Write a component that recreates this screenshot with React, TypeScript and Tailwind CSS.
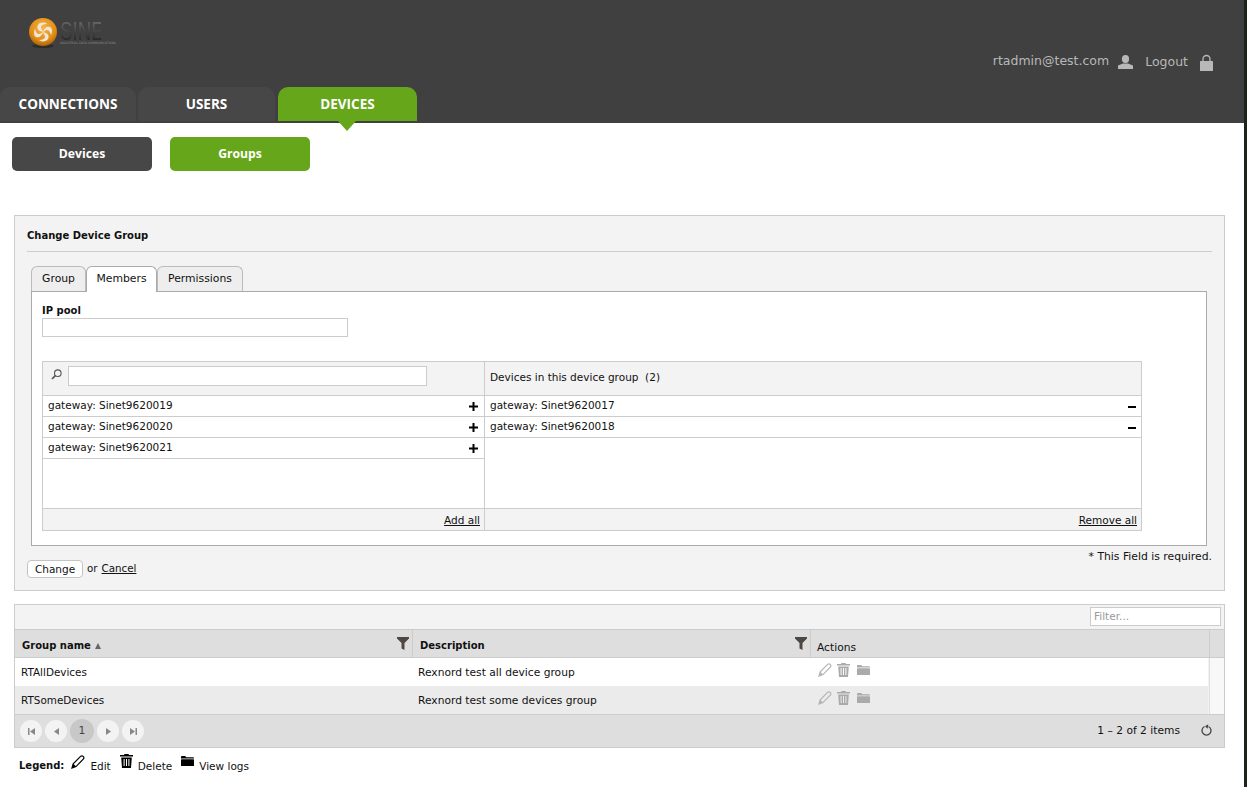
import type { ReactNode } from 'react'

const font = { fontFamily: '"DejaVu Sans", sans-serif' }

function Logo() {
  return (
    <div className="flex items-start gap-[2px]">
      <svg width="30" height="32" viewBox="0 0 30 32" className="mt-[1px]">
        <defs>
          <radialGradient id="orb" cx="50%" cy="35%" r="65%">
            <stop offset="0%" stopColor="#f5b64a" />
            <stop offset="70%" stopColor="#e28d14" />
            <stop offset="100%" stopColor="#a96208" />
          </radialGradient>
        </defs>
        <ellipse cx="15" cy="29" rx="11" ry="2" fill="#2c2c2c" />
        <circle cx="15" cy="15" r="14" fill="url(#orb)" />
        <path d="M15 15c-4-1-7-3-5-7 2-3 7-3 9-1-3 0-6 1-6 3 0 2 2 4 2 5z" fill="#f0e6d8" />
        <path d="M15 15c4 1 7 3 5 7-2 3-7 3-9 1 3 0 6-1 6-3 0-2-2-4-2-5z" fill="#f0e6d8" />
        <path d="M15 15c1-4 4-6 7-5 3 2 2 6 1 8-1-3-2-5-4-5-2 0-3 2-4 2z" fill="#f0e6d8" />
        <path d="M15 15c-1 4-4 6-7 5-3-2-2-6-1-8 1 3 2 5 4 5 2 0 3-2 4-2z" fill="#f0e6d8" />
      </svg>
      <div className="mt-[3px] flex w-[55px] flex-col">
        <span
          className="block h-[22px] origin-left scale-x-[0.75] bg-gradient-to-b from-[#707070] to-[#262626] bg-clip-text text-[25px] leading-[25px] text-transparent"
          style={{ fontFamily: '"Liberation Sans", sans-serif' }}
        >
          SINET
        </span>
        <span className="whitespace-nowrap text-[3px] leading-[5px] text-[#8a8a8a]">
          INDUSTRIAL DATA COMMUNICATIONS
        </span>
      </div>
    </div>
  )
}

function UserIcon() {
  return (
    <svg width="15" height="14" viewBox="0 0 15 14" fill="#b8b8b8">
      <ellipse cx="7.5" cy="4" rx="3.6" ry="4" />
      <path d="M0 10.5 5 8.5h5l5 2V14H0z" />
    </svg>
  )
}

function LockIcon() {
  return (
    <svg width="13" height="17" viewBox="0 0 13 17" fill="none">
      <path d="M3 8V5a3.5 3.5 0 0 1 7 0v3" stroke="#b8b8b8" strokeWidth="1.3" />
      <rect y="7" width="13" height="10" rx="0.5" fill="#b8b8b8" />
    </svg>
  )
}

function PencilIcon({ color, size = 14 }: { color: string; size?: number }) {
  return (
    <svg width={size} height={size} viewBox="0 0 14 14" fill="none">
      <path d="M1 13 2.2 8.8 9.8 1.2c.8-.6 1.8-.4 2.4.2.7.7.9 1.7.3 2.5L5 11.6z" stroke={color} strokeWidth="1.2" />
      <path d="M1 13l1.2-4.2 3 2.8z" fill={color} />
    </svg>
  )
}

function TrashIcon({ color }: { color: string }) {
  return (
    <svg width="13" height="14" viewBox="0 0 13 14" fill={color}>
      <path d="M4.5 0h4l.5 1h4v1.5H0V1h4z" />
      <path d="M1.2 3.5h10.6L11 14H2zM3.6 5v7h1V5zm2.4 0v7h1V5zm2.4 0v7h1V5z" fillRule="evenodd" />
    </svg>
  )
}

function FolderIcon({ color }: { color: string }) {
  return (
    <svg width="13" height="10" viewBox="0 0 13 10" fill={color}>
      <path d="M0 1.2C0 .5.4 0 1 0h3.2l1 1.2H12c.6 0 1 .4 1 1V2.600H0z" />
      <rect y="3.200" width="13" height="6.800" rx="0.6" />
    </svg>
  )
}

function FilterIcon() {
  return (
    <svg width="12" height="13" viewBox="0 0 12 13" fill="#4f4842">
      <path d="M0 0h12v1.500L7.500 6v7l-3-1.500V6L0 1.500z" />
    </svg>
  )
}

function SearchIcon() {
  return (
    <svg width="11" height="11" viewBox="0 0 11 11" fill="none" stroke="#555">
      <circle cx="6.800" cy="4.200" r="3.300" strokeWidth="1.100" />
      <path d="M4.300 6.700 1 10" strokeWidth="1.700" />
    </svg>
  )
}

function PagerButton({ children }: { children: ReactNode }) {
  return (
    <div className="flex h-[22px] w-[22px] items-center justify-center rounded-full bg-[#f3f3f3]">
      {children}
    </div>
  )
}

function ListRow({ label, sign }: { label: string; sign: '+' | '-' }) {
  return (
    <div className="flex h-[21px] items-center justify-between border-b border-[#cccccc] pl-[5px] pr-[5px] text-[10.5px]">
      <span>{label}</span>
      {sign === '+' ? (
        <svg width="9" height="9" viewBox="0 0 9 9" fill="#000" className="mt-[1px] mr-[1px]">
          <path d="M3.500 0h2v3.500H9v2H5.500V9h-2V5.500H0v-2h3.500z" />
        </svg>
      ) : (
        <span className="mt-[1px] h-[2px] w-[8px] bg-black" />
      )}
    </div>
  )
}

function ActionIcons() {
  return (
    <div className="flex items-start gap-[5px] pl-[7px] pt-[5px]">
      <PencilIcon color="#b5b5b5" />
      <TrashIcon color="#aaaaaa" />
      <div className="ml-[2px] mt-[2px]">
        <FolderIcon color="#aaaaaa" />
      </div>
    </div>
  )
}

export default function App() {
  return (
    <div className="flex h-[787px] w-[1247px] overflow-hidden bg-white text-[10.7px] text-[#111]" style={font}>
      <div className="w-[1244px]">
        <header className="h-[123px] bg-[#404040]">
          <div className="flex h-[87px] justify-between">
            <div className="pl-[28px] pt-[16px]">
              <Logo />
            </div>
            <div className="flex items-start pr-[31px] pt-[53px] text-[#b8b8b8]">
              <span className="text-[12.5px] leading-[15px]">rtadmin@test.com</span>
              <div className="ml-[9px] mt-[2px]">
                <UserIcon />
              </div>
              <span className="ml-[12px] mt-[1px] text-[12.5px] leading-[15px]">Logout</span>
              <div className="ml-[12px] mt-[1px]">
                <LockIcon />
              </div>
            </div>
          </div>
          <nav className="flex h-[34px] font-bold text-white" style={{ fontFamily: '"Open Sans", sans-serif' }}>
            <div className="flex w-[136px] items-center justify-center rounded-t-[10px] bg-[#474747] pt-[1px] text-[13.5px]">CONNECTIONS</div>
            <div className="ml-[2px] flex w-[137px] items-center justify-center rounded-t-[10px] bg-[#474747] pt-[1px] text-[13.5px]">USERS</div>
            <div className="relative ml-[3px] flex w-[139px] items-center justify-center rounded-t-[10px] bg-[#66a61a] pt-[1px] text-[13.5px]">
              DEVICES
              <span className="absolute left-[60px] top-[34px] h-0 w-0 border-x-[9px] border-t-[10px] border-x-transparent border-t-[#66a61a]" />
            </div>
          </nav>
        </header>

        <div className="flex gap-[18px] pl-[12px] pt-[14px] font-bold text-white" style={{ fontFamily: '"Open Sans", sans-serif' }}>
          <div className="flex h-[34px] w-[140px] items-center justify-center rounded-[5px] bg-[#474747] text-[12.2px]">Devices</div>
          <div className="flex h-[34px] w-[140px] items-center justify-center rounded-[5px] bg-[#66a61a] text-[12.2px]">Groups</div>
        </div>

        <section className="ml-[14px] mt-[44px] h-[376px] w-[1211px] border border-[#cccccc] bg-[#f3f3f3] px-[12px]">
          <h2 className="border-b border-[#cccccc] pb-[8px] pt-[13px] text-[10px] font-bold leading-[14px]">Change Device Group</h2>

          <div className="ml-[4px] mt-[14px] flex h-[25px] items-end text-[10.8px]">
            <div className="flex h-[25px] w-[55px] items-center justify-center rounded-t-[6px] border border-b-0 border-[#bbbbbb] bg-[#eeeeee] pt-[1px]">Group</div>
            <div className="relative z-10 -mb-[1px] flex h-[26px] w-[71px] items-center justify-center rounded-t-[6px] border border-b-0 border-[#aaaaaa] bg-white">Members</div>
            <div className="flex h-[25px] w-[86px] items-center justify-center rounded-t-[6px] border border-b-0 border-[#bbbbbb] bg-[#eeeeee] pt-[1px]">Permissions</div>
          </div>

          <div className="ml-[4px] h-[255px] w-[1176px] border border-[#aaaaaa] bg-white px-[10px]">
            <label className="block pt-[12px] text-[10px] font-bold leading-[14px]">IP pool</label>
            <div className="h-[19px] w-[306px] border border-[#cccccc] bg-white" />

            <div className="mt-[24px] flex h-[170px] w-[1100px] border border-[#cccccc] bg-white">
              <div className="flex w-[442px] flex-col border-r border-[#cccccc]">
                <div className="flex h-[34px] items-start border-b border-[#cccccc] bg-[#f3f3f3] pl-[8px] pt-[4px]">
                  <div className="mt-[3px]">
                    <SearchIcon />
                  </div>
                  <div className="ml-[6px] h-[20px] w-[359px] border border-[#cccccc] bg-white" />
                </div>
                <div className="flex-1">
                  <ListRow label="gateway: Sinet9620019" sign="+" />
                  <ListRow label="gateway: Sinet9620020" sign="+" />
                  <ListRow label="gateway: Sinet9620021" sign="+" />
                </div>
                <div className="flex h-[22px] items-center justify-end border-t border-[#cccccc] bg-[#f3f3f3] pr-[4px] pt-[2px] text-[10.5px]">
                  <span className="underline">Add all</span>
                </div>
              </div>
              <div className="flex flex-1 flex-col">
                <div className="flex h-[34px] items-center border-b border-[#cccccc] bg-[#f3f3f3] pb-[2px] pl-[5px] text-[10.5px]">
                  <span className="whitespace-pre">Devices in this device group  (2)</span>
                </div>
                <div className="flex-1">
                  <ListRow label="gateway: Sinet9620017" sign="-" />
                  <ListRow label="gateway: Sinet9620018" sign="-" />
                </div>
                <div className="flex h-[22px] items-center justify-end border-t border-[#cccccc] bg-[#f3f3f3] pr-[4px] pt-[2px] text-[10.5px]">
                  <span className="underline">Remove all</span>
                </div>
              </div>
            </div>
          </div>

          <p className="mt-[4px] text-right text-[10.8px] leading-[14px]">* This Field is required.</p>
          <div className="-mt-[4px] flex items-center text-[10.3px]">
            <button className="h-[18px] w-[56px] rounded-[4px] border border-[#c4c4c4] bg-white text-[10.5px] leading-none">Change</button>
            <span className="ml-[4px]">or</span>
            <span className="ml-[4px] underline">Cancel</span>
          </div>
        </section>

        <section className="ml-[14px] mt-[13px] h-[144px] w-[1211px] border border-[#cccccc] bg-[#f3f3f3]">
          <div className="flex h-[25px] justify-end border-b border-[#cccccc] pr-[3px] pt-[2px]">
            <div className="h-[19px] w-[131px] border border-[#cccccc] bg-white pl-[3px] text-[10.5px] leading-[17px] text-[#999999]">Filter...</div>
          </div>
          <div className="grid h-[28px] grid-cols-[398px_398px_399px_1fr] border-b border-[#cccccc] bg-[#dedede] text-[10px] font-bold">
            <div className="flex justify-between border-r border-[#cccccc] pl-[7px] pr-[3px]">
              <span className="flex items-center gap-[4px] pt-[4px]">
                Group name
                <span className="h-0 w-0 border-x-[3.500px] border-b-[6px] border-x-transparent border-b-[#666666]" />
              </span>
              <div className="pt-[7px]">
                <FilterIcon />
              </div>
            </div>
            <div className="flex justify-between border-r border-[#cccccc] pl-[7px] pr-[3px]">
              <span className="pt-[8px]">Description</span>
              <div className="pt-[7px]">
                <FilterIcon />
              </div>
            </div>
            <div className="border-r border-[#cccccc] pl-[6px] pt-[10px] text-[10.7px] font-normal">Actions</div>
            <div />
          </div>
          <div className="grid h-[28px] grid-cols-[398px_398px_397px_1fr]">
            <div className="bg-white pl-[6px] pt-[7px] text-[10.4px]">RTAllDevices</div>
            <div className="bg-white pl-[5px] pt-[7px]">Rexnord test all device group</div>
            <div className="bg-white">
              <ActionIcons />
            </div>
            <div className="ml-[1px] border-l border-[#dddddd] bg-[#f8f8f8]" />
          </div>
          <div className="grid h-[28px] grid-cols-[398px_398px_397px_1fr]">
            <div className="bg-[#ebebeb] pl-[6px] pt-[7px] text-[10.4px]">RTSomeDevices</div>
            <div className="bg-[#ebebeb] pl-[5px] pt-[7px]">Rexnord test some devices group</div>
            <div className="bg-[#ebebeb]">
              <ActionIcons />
            </div>
            <div className="ml-[1px] border-l border-[#dddddd] bg-[#f8f8f8]" />
          </div>
          <div className="flex h-[33px] items-center justify-between border-t border-[#cccccc] bg-[#dedede] pl-[5px] pr-[11px]">
            <div className="flex items-center gap-[3px]">
              <PagerButton>
                <svg width="7" height="7" viewBox="0 0 7 7" fill="#888">
                  <path d="M0 0h1.500v7H0zM7 0v7L2 3.500z" />
                </svg>
              </PagerButton>
              <PagerButton>
                <svg width="5" height="7" viewBox="0 0 5 7" fill="#888">
                  <path d="M5 0v7L0 3.500z" />
                </svg>
              </PagerButton>
              <div className="flex h-[24px] w-[24px] items-center justify-center rounded-full bg-[#c8c8c8] text-[#444]">1</div>
              <PagerButton>
                <svg width="5" height="7" viewBox="0 0 5 7" fill="#888">
                  <path d="M0 0v7l5-3.500z" />
                </svg>
              </PagerButton>
              <PagerButton>
                <svg width="7" height="7" viewBox="0 0 7 7" fill="#888">
                  <path d="M0 0v7l5-3.500zM5.500 0H7v7H5.500z" />
                </svg>
              </PagerButton>
            </div>
            <div className="flex items-center">
              <span>1 – 2 of 2 items</span>
              <svg width="12" height="12" viewBox="0 0 12 12" fill="none" className="ml-[21px] -mt-[1px]">
                <path d="M3.500 2.500a4.500 4.500 0 1 0 4 0" stroke="#444" strokeWidth="1.300" />
                <path d="M7 0v4.500l-3-2z" fill="#444" transform="rotate(10 6 2)" />
              </svg>
            </div>
          </div>
        </section>

        <div className="ml-[19px] mt-[6px] flex items-start text-[10.5px]">
          <span className="mt-[5px] text-[10px] font-bold leading-[14px]">Legend:</span>
          <div className="ml-[7px] mt-[1px]">
            <PencilIcon color="#000000" size={14} />
          </div>
          <span className="ml-[5px] mt-[5px] leading-[14px]">Edit</span>
          <div className="ml-[9px]">
            <TrashIcon color="#000000" />
          </div>
          <span className="ml-[5px] mt-[5px] leading-[14px]">Delete</span>
          <div className="ml-[9px] mt-[2px]">
            <FolderIcon color="#000000" />
          </div>
          <span className="ml-[5px] mt-[5px] leading-[14px]">View logs</span>
        </div>
      </div>
      <div className="w-[3px] bg-[#1f2418]" />
    </div>
  )
}
